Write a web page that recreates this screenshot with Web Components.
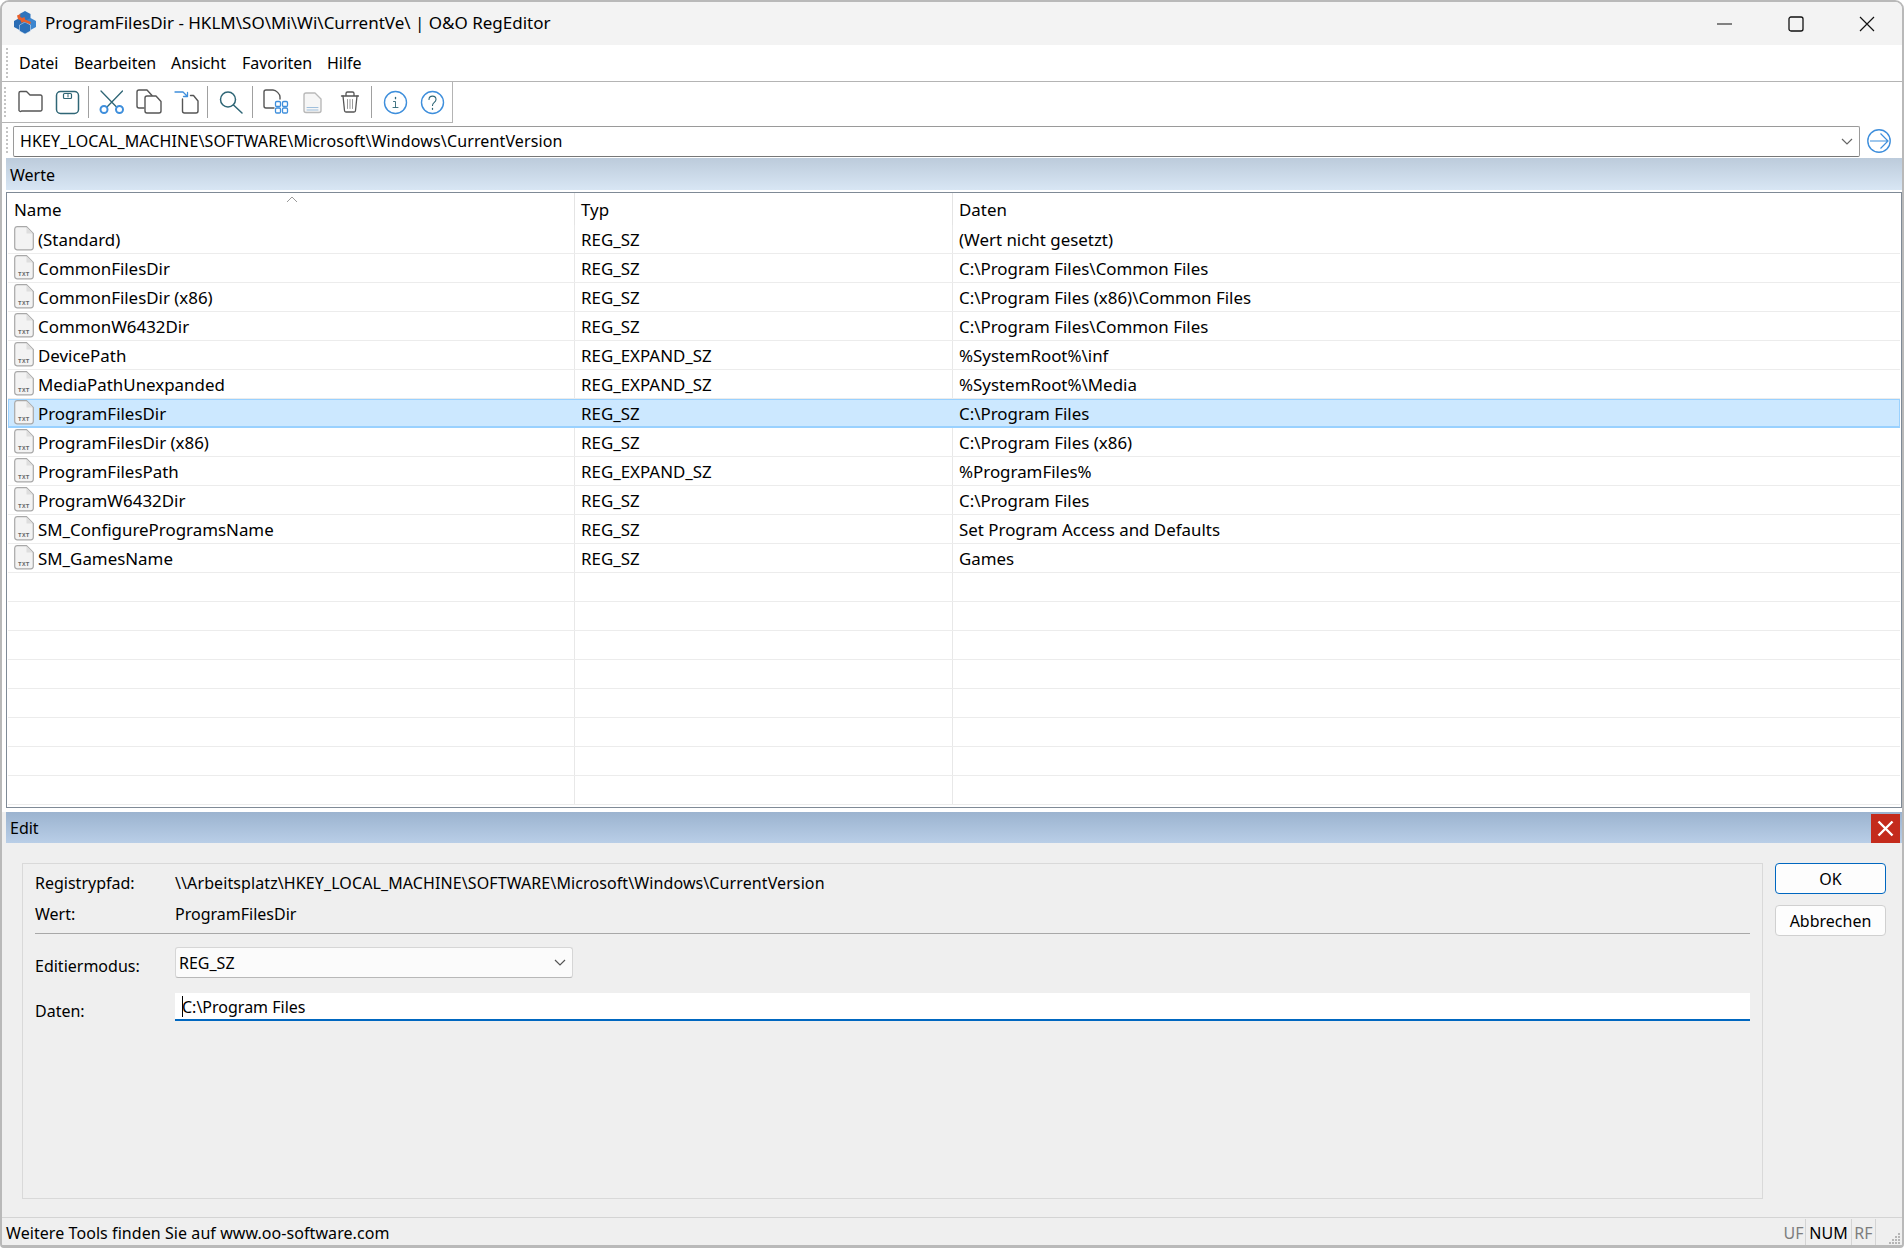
<!DOCTYPE html>
<html lang="de">
<head>
<meta charset="utf-8">
<title>O&amp;O RegEditor</title>
<style>
html,body{margin:0;padding:0;background:#fff;height:100%}
body{font:16px/20px "Noto Sans","Open Sans",sans-serif;color:#000;overflow:hidden}
</style>
</head>
<body>
<reg-window>
  <title-bar></title-bar>
  <menu-bar></menu-bar>
  <tool-bar></tool-bar>
  <address-bar></address-bar>
  <pane-header>Werte</pane-header>
  <value-table>
    <value-row name="(Standard)" type="REG_SZ" data="(Wert nicht gesetzt)" icon="blank"></value-row>
    <value-row name="CommonFilesDir" type="REG_SZ" data="C:\Program Files\Common Files"></value-row>
    <value-row name="CommonFilesDir (x86)" type="REG_SZ" data="C:\Program Files (x86)\Common Files"></value-row>
    <value-row name="CommonW6432Dir" type="REG_SZ" data="C:\Program Files\Common Files"></value-row>
    <value-row name="DevicePath" type="REG_EXPAND_SZ" data="%SystemRoot%\inf"></value-row>
    <value-row name="MediaPathUnexpanded" type="REG_EXPAND_SZ" data="%SystemRoot%\Media"></value-row>
    <value-row name="ProgramFilesDir" type="REG_SZ" data="C:\Program Files" selected></value-row>
    <value-row name="ProgramFilesDir (x86)" type="REG_SZ" data="C:\Program Files (x86)"></value-row>
    <value-row name="ProgramFilesPath" type="REG_EXPAND_SZ" data="%ProgramFiles%"></value-row>
    <value-row name="ProgramW6432Dir" type="REG_SZ" data="C:\Program Files"></value-row>
    <value-row name="SM_ConfigureProgramsName" type="REG_SZ" data="Set Program Access and Defaults"></value-row>
    <value-row name="SM_GamesName" type="REG_SZ" data="Games"></value-row>
    <value-row></value-row><value-row></value-row><value-row></value-row><value-row></value-row>
    <value-row></value-row><value-row></value-row><value-row></value-row><value-row></value-row>
  </value-table>
  <edit-pane></edit-pane>
  <status-bar></status-bar>
</reg-window>

<script>
function def(tag, css, html, init){
  customElements.define(tag, class extends HTMLElement{
    constructor(){
      super();
      const r=this.attachShadow({mode:'open'});
      r.innerHTML='<style>'+css+'</style>'+(typeof html==='function'?html(this):html);
    }
    connectedCallback(){
      if(typeof html==='function'){
        this.shadowRoot.innerHTML='<style>'+css+'</style>'+html(this);
      }
      if(init)init(this);
    }
  });
}

def('reg-window',`
:host{display:flex;flex-direction:column;box-sizing:border-box;width:1904px;height:1248px;border:2px solid #b9b9b9;border-bottom-width:3px;border-radius:9px 9px 4px 4px;overflow:hidden;background:#fff}
`,'<slot></slot>');

def('title-bar',`
:host{display:flex;align-items:center;height:43px;flex:none;background:#f3f3f3;font-size:17px}
svg{display:block;flex:none}
.logo{margin-left:12px;margin-right:9px;margin-bottom:2px}
.t{flex:1;white-space:nowrap;padding-bottom:1px}
.c{width:71px;height:43px;display:flex;align-items:center;justify-content:center}
`,`<svg class="logo" width="22" height="23" viewBox="0 0 22 23">
<path d="M11 0l5.500 3v6L11 12 5.500 9V3z" fill="#2f74bd"/>
<path d="M5.500 7L11 10v6l-5.500 3L0 16v-6z" fill="#2a6cb4"/>
<path d="M16.500 7L22 10v6l-5.500 3L11 16v-6z" fill="#3d86cf"/>
<path d="M11 11l5.500 3v6L11 23l-5.500-3v-6z" fill="#2b6fb8" stroke="#e9f1f9" stroke-width=".5"/>
<path d="M3 4.500l3.500-1.500-.5 2.500 2 1.500 2.500-1 .5 2.500 6 2.500-.8 2.200-6.200-2.500-2.500 1-1-2.500-2.500-1z" fill="#e8602c"/>
</svg>
<span class="t">ProgramFilesDir - HKLM\\SO\\Mi\\Wi\\CurrentVe\\ | O&amp;O RegEditor</span>
<span class="c"><svg width="16" height="16" viewBox="0 0 16 16"><path d="M0 8h15" stroke="#111" stroke-width="1.1"/></svg></span>
<span class="c"><svg width="16" height="16" viewBox="0 0 16 16"><rect x="1" y="1" width="14" height="14" rx="2" fill="none" stroke="#111" stroke-width="1.3"/></svg></span>
<span class="c"><svg width="16" height="16" viewBox="0 0 16 16"><path d="M1 1l14 14M15 1L1 15" stroke="#111" stroke-width="1.2"/></svg></span>`);

def('menu-bar',`
:host{display:flex;align-items:center;height:36px;flex:none;border-bottom:1px solid #b4b4b4;background:#fff;padding-left:4px}
.g{margin-right:10px;display:block}
span{display:block;white-space:nowrap;padding-bottom:1px;letter-spacing:-.05px}
`,`<svg class="g" width="3" height="32" viewBox="0 0 3 32"><path d="M1 1v30" stroke="#c4c4c4" stroke-width="2" stroke-dasharray="2 2" fill="none"/></svg>
<span style="width:55px">Datei</span><span style="width:97px">Bearbeiten</span><span style="width:71px">Ansicht</span><span style="width:85px">Favoriten</span><span>Hilfe</span>`);

def('tool-btn',`
:host{display:block;width:37px;height:40px;flex:none}
::slotted(svg){display:block}
`,'<slot></slot>');

const D='#555',T='#2f6676',B='#3f8fdc';
function ic(p){return '<tool-btn><svg width="37" height="40" viewBox="0 0 37 40" fill="none" stroke-linejoin="round" stroke-linecap="round">'+p+'</svg></tool-btn>';}
const sep='<i class="s"></i>';
def('tool-bar',`
:host{display:block;height:41px;flex:none;background:#fff}
.b{display:flex;width:450px;height:40px;box-sizing:content-box;border-right:1px solid #b4b4b4;border-bottom:1px solid #b4b4b4}
.g{display:block;margin:4px 4px 4px 2px;flex:none;width:3px}
.s{display:block;flex:none;width:8px;position:relative}
.s::after{content:"";position:absolute;left:3px;top:4px;bottom:4px;width:1px;background:#a0a0a0}
`,`<div class="b"><svg class="g" width="3" height="32" viewBox="0 0 3 32"><path d="M1 1v30" stroke="#c4c4c4" stroke-width="2" stroke-dasharray="2 2" fill="none"/></svg>`+
ic(`<path d="M8 27.500V11a1.500 1.500 0 0 1 1.500-1.500h6l3.500 3.500h10.500a1.500 1.500 0 0 1 1.500 1.500v13a1.500 1.500 0 0 1-1.500 1.500h-19A1.500 1.500 0 0 1 8 27.500z" stroke="${D}" stroke-width="1.400"/>`)+
ic(`<rect x="8.500" y="9.500" width="22" height="22" rx="4" stroke="${T}" stroke-width="1.500"/><rect x="15.500" y="11.500" width="8" height="5" rx="1" stroke="${T}" stroke-width="1.200"/><path d="M20 12.500v2.500" stroke="${T}"/>`)+sep+
ic(`<path d="M8 9l15.500 16M29.500 9L14 25" stroke="${T}" stroke-width="1.300"/><circle cx="11" cy="27.500" r="3.500" stroke="${B}" stroke-width="2"/><circle cx="26.500" cy="27.500" r="3.500" stroke="${B}" stroke-width="2"/>`)+
ic(`<path d="M14 26H9a2 2 0 0 1-2-2V10a2 2 0 0 1 2-2h8l5 5.500" stroke="${D}" stroke-width="1.400"/><path d="M15 16v13a2 2 0 0 0 2 2h12a2 2 0 0 0 2-2V19.500L26 14h-9a2 2 0 0 0-2 2z" stroke="${D}" stroke-width="1.400" fill="#fff"/>`)+
ic(`<path d="M15.500 17v12a2 2 0 0 0 2 2h11.500a2 2 0 0 0 2-2V19l-4.500-5.500h-3" stroke="${D}" stroke-width="1.400"/><path d="M8 10h8l4.500 4.500M20.500 10.500v4h-4" stroke="${B}" stroke-width="1.300"/>`)+sep+
ic(`<circle cx="16" cy="17.500" r="7.500" stroke="${T}" stroke-width="1.500"/><path d="M21.500 23l8.500 8" stroke="${T}" stroke-width="1.500"/>`)+sep+
ic(`<path d="M17 26H9a2 2 0 0 1-2-2V10a2 2 0 0 1 2-2h7c3 0 7 4 7 7v2" stroke="${D}" stroke-width="1.400"/><g stroke="${B}" stroke-width="1.300"><rect x="18.500" y="19.500" width="5" height="5" rx="1.200"/><rect x="25.500" y="19.500" width="5" height="5" rx="1.200"/><rect x="18.500" y="26" width="5" height="5" rx="1.200"/><rect x="25.500" y="26" width="5" height="5" rx="1.200"/></g>`)+
ic(`<path d="M10 13a2 2 0 0 1 2-2h9l6 6v11.500a2 2 0 0 1-2 2H12a2 2 0 0 1-2-2z" stroke="#b9b9b9" stroke-width="1.400" fill="#f6f6f6"/><path d="M13 25.500h11M13 28h11" stroke="#9fbfdc"/>`)+
ic(`<path d="M10.500 14h17M15 13.500v-2a1.500 1.500 0 0 1 1.500-1.500h5a1.500 1.500 0 0 1 1.500 1.500v2" stroke="${D}" stroke-width="1.300"/><path d="M12 14l1.500 14.500a1.500 1.500 0 0 0 1.500 1.500h8a1.500 1.500 0 0 0 1.500-1.500L26 14" stroke="${D}" stroke-width="1.300"/><path d="M16.500 17.500v9M19 17.500v9M21.500 17.500v9" stroke="#999"/>`)+sep+
ic(`<circle cx="19.500" cy="20.500" r="11" stroke="${B}" stroke-width="1.400"/><path d="M17.500 19.500h2v6M17 25.500h5" stroke="${T}" stroke-width=".9"/><path d="M19.500 15.500v1.200" stroke="${T}" stroke-width="1.300"/>`)+
ic(`<circle cx="19.500" cy="20.500" r="11" stroke="${B}" stroke-width="1.400"/><path d="M16 17.500c0-4.500 7-4.500 7 0 0 3-3.500 2.800-3.500 6" stroke="${T}" stroke-width="1.100"/><path d="M19.500 26.500v.8" stroke="${T}" stroke-width="1.300"/>`)+
`</div>`);

def('address-bar',`
:host{display:flex;align-items:flex-start;height:35px;flex:none;background:#fff;padding-left:4px;box-sizing:border-box;padding-top:3px}
.g{display:block;flex:none}
.f{flex:none;box-sizing:border-box;width:1847px;height:31px;margin-left:4px;border:1px solid #9a9a9a;border-bottom-color:#777;border-radius:2px;display:flex;align-items:center;padding-left:6px}
.x{flex:1;white-space:nowrap;letter-spacing:.13px;padding-bottom:1px}
.ch{margin-right:6px;display:block}
.go{display:block;margin-left:6px;margin-top:2px;flex:none}
`,`<svg class="g" width="3" height="30" viewBox="0 0 3 30"><path d="M1 1v28" stroke="#c4c4c4" stroke-width="2" stroke-dasharray="2 2" fill="none"/></svg>
<div class="f"><span class="x">HKEY_LOCAL_MACHINE\\SOFTWARE\\Microsoft\\Windows\\CurrentVersion</span><svg class="ch" width="12" height="8" viewBox="0 0 12 8"><path d="M1 1l5 5 5-5" fill="none" stroke="#666" stroke-width="1.200"/></svg></div>
<svg class="go" width="26" height="26" viewBox="0 0 26 26" fill="none"><circle cx="13" cy="13" r="11.200" stroke="#3f8fdc" stroke-width="1.400"/><path d="M4 13h17M14.500 5.500L22 13l-7.500 7.500" stroke="#3f8fdc" stroke-width="1.200"/></svg>`);

def('pane-header',`
:host{display:flex;align-items:center;box-sizing:border-box;flex:none;height:32px;margin:0 0 2px 4px;padding:1px 0 0 4px;background:linear-gradient(#bccbdb,#d8e6f4);white-space:nowrap}
`,'<slot></slot>');

def('value-table',`
:host{display:flex;flex-direction:column;flex:none;box-sizing:border-box;height:616px;margin:0 0 4px 4px;border:1px solid #7f8a96;background:#fff;overflow:hidden;font-size:16.900px}
.h{display:grid;grid-template-columns:568px 378px 1fr;height:32px;flex:none}
.h div{display:flex;align-items:center;padding-left:6px;border-right:1px solid #e4e4e4;position:relative;padding-top:1px}
.h div:first-child{padding-left:7px}
.h div:last-child{border-right:0}
.a{position:absolute;left:279px;top:3px;display:block}
`,`<div class="h"><div>Name<svg class="a" width="12" height="7" viewBox="0 0 12 7"><path d="M1 6l5-5 5 5" fill="none" stroke="#9a9a9a"/></svg></div><div>Typ</div><div>Daten</div></div><slot></slot>`);

const TXT='<svg class="i" width="20" height="25" viewBox="0 0 20 25"><path d="M3 .700h9.500L19.300 7.500V21.300a2.500 2.500 0 0 1-2.500 2.500H3A2.500 2.500 0 0 1 .700 21.300V3A2.500 2.500 0 0 1 3 .700z" fill="#f3f3f3" stroke="#a8a8a8" stroke-width="1.200"/><path d="M12.500 1v6.500h6.500z" fill="#dedede"/>TXTMARK</svg>';
def('value-row',`
:host{display:grid;grid-template-columns:567px 378px 1fr;height:29px;flex:none;box-sizing:border-box;margin:0 1px;border-bottom:1px solid #ececec}
:host([selected]){background:#cce8ff;box-shadow:inset 0 0 0 1px #99d1ff;border-bottom-color:#99d1ff}
div{display:flex;align-items:center;padding:2px 0 0 6px;border-right:1px solid #e8e8e8;white-space:nowrap;min-width:0}
:host([selected]) div{border-right-color:transparent}
div:last-child{border-right:0}
.n{padding-left:6px}
.i{display:block;margin:-3px 4px 0 0;flex:none}
text{font:bold 6px "Liberation Mono",monospace;fill:#666;letter-spacing:.3px}
`,el=>{
  const n=el.getAttribute('name');
  if(n===null)return '<div></div><div></div><div></div>';
  const m=el.getAttribute('icon')==='blank'?'':'<text x="4" y="21">TXT</text>';
  const e=s=>s.replace(/&/g,'&amp;');
  return `<div class="n">${TXT.replace('TXTMARK',m)}${e(n)}</div><div>${e(el.getAttribute('type'))}</div><div>${e(el.getAttribute('data'))}</div>`;
});

def('edit-pane',`
:host{display:block;flex:none;height:405px;background:#efefef;margin:0;position:relative}
.hd{display:flex;align-items:center;height:31px;margin-left:4px;background:linear-gradient(#9bb3cf,#b9cee7);padding-left:4px;box-sizing:border-box}
.hd span{flex:1}
.cl{width:29px;height:29px;margin:2px 2px 0 0;background:#c42b1c;display:flex;align-items:center;justify-content:center;flex:none}
.cl svg{display:block}
.body{display:flex;padding:20px 17px 0 20px;align-items:flex-start}
.grp{box-sizing:border-box;width:1741px;height:336px;border:1px solid #d9d9d9;padding:0 12px 0 12px;flex:none}
.r{display:grid;grid-template-columns:140px 1fr;align-items:center}
.r span{white-space:nowrap}
.r1{height:31px;margin-top:3px}
.r1 span:last-child{letter-spacing:.1px}
.r2{height:31px}
hr{border:0;border-top:1px solid #a8a8a8;margin:4px 0 13px}
.cb{box-sizing:border-box;width:398px;height:31px;border:1px solid #d6d6d6;border-bottom-color:#b8b8b8;border-radius:3px;background:#fbfbfb;display:flex;align-items:center;padding:0 6px 0 3px}
.cb b{font-weight:400;flex:1}
.cb svg{display:block}
.r3{height:31px}
.r4{height:28px;margin-top:15px}
.ed{box-sizing:border-box;height:28px;background:#fff;border-bottom:2px solid #0067c0;padding:2px 0 0 7px;display:flex;align-items:center;position:relative}
.ed i{position:absolute;left:7px;top:3px;height:21px;width:1px;background:#000}
.lb{position:relative;top:3px}
.r4 .lb{top:4px}
.btns{display:flex;flex-direction:column;margin-left:12px;gap:11px;flex:none}
.bt{box-sizing:border-box;width:111px;height:31px;border:1px solid #d0d0d0;border-radius:4px;background:#fdfdfd;display:flex;align-items:center;justify-content:center}
.bt.p{border-color:#0067c0}
`,`<div class="hd"><span>Edit</span><div class="cl"><svg width="17" height="17" viewBox="0 0 17 17"><path d="M1.500 1.500l14 14M15.500 1.500l-14 14" stroke="#fff" stroke-width="2.400"/></svg></div></div>
<div class="body"><div class="grp">
<div class="r r1"><span>Registrypfad:</span><span>\\\\Arbeitsplatz\\HKEY_LOCAL_MACHINE\\SOFTWARE\\Microsoft\\Windows\\CurrentVersion</span></div>
<div class="r r2"><span>Wert:</span><span>ProgramFilesDir</span></div>
<hr>
<div class="r r3"><span class="lb">Editiermodus:</span><div class="cb"><b>REG_SZ</b><svg width="12" height="8" viewBox="0 0 12 8"><path d="M1 1l5 5 5-5" fill="none" stroke="#555" stroke-width="1.200"/></svg></div></div>
<div class="r r4"><span class="lb">Daten:</span><div class="ed"><i></i>C:\\Program Files</div></div>
</div>
<div class="btns"><div class="bt p">OK</div><div class="bt">Abbrechen</div></div></div>`);

def('status-bar',`
:host{display:flex;align-items:stretch;flex:none;height:28px;box-sizing:border-box;background:#efefef;border-top:1px solid #d4d4d4;padding-left:4px;position:relative}
.m{flex:1;display:flex;align-items:center;white-space:nowrap;padding-top:2px;letter-spacing:.07px}
.p{display:flex;align-items:center;justify-content:center;border-right:1px solid #d4d4d4;margin-top:1px;padding-top:2px;box-sizing:border-box}
.d{color:#7d7d7d}
.gr{display:block;align-self:flex-end}
`,`<div class="m">Weitere Tools finden Sie auf www.oo-software.com</div>
<div class="p d" style="width:24px">UF</div><div class="p" style="width:46px">NUM</div><div class="p d" style="width:24px">RF</div>
<div style="width:26px;display:flex;justify-content:flex-end;align-items:flex-end"><svg class="gr" width="14" height="14" viewBox="0 0 14 14" fill="#b5b5b5"><rect x="10" y="2" width="2" height="2"/><rect x="7" y="5" width="2" height="2"/><rect x="10" y="5" width="2" height="2"/><rect x="4" y="8" width="2" height="2"/><rect x="7" y="8" width="2" height="2"/><rect x="10" y="8" width="2" height="2"/><rect x="1" y="11" width="2" height="2"/><rect x="4" y="11" width="2" height="2"/><rect x="7" y="11" width="2" height="2"/><rect x="10" y="11" width="2" height="2"/></svg></div>`);
</script>
</body>
</html>
